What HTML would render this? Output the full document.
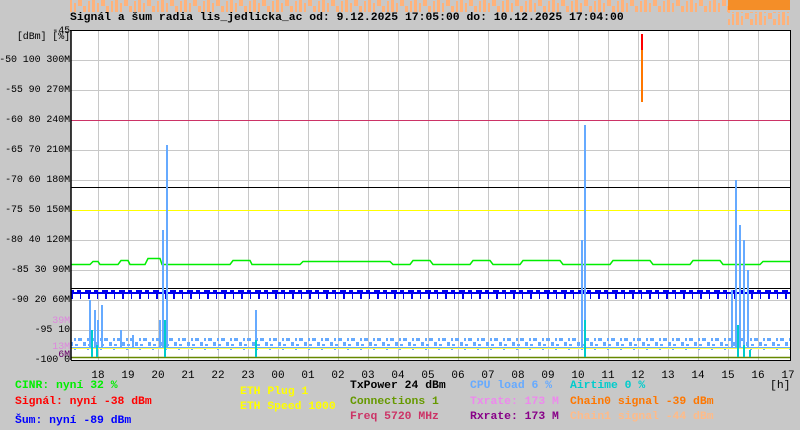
<!DOCTYPE html>
<html><head><meta charset="utf-8"><style>
body{margin:0;width:800px;height:430px;background:#c8c8c8;overflow:hidden;position:relative;font-family:"Liberation Mono",monospace;font-weight:bold;font-size:11.4px}
.t{position:absolute;white-space:pre;line-height:13px}
.y{position:absolute;right:730px;white-space:pre;font-weight:normal;font-size:10px;line-height:12px;letter-spacing:-0.1px}
.h{position:absolute;top:370px;width:30px;margin-left:-15px;text-align:center;font-weight:normal;font-size:11px;line-height:13px}
</style></head><body>
<svg width="800" height="430" style="position:absolute;left:0;top:0">
<defs>
<pattern id="or" width="23" height="13" patternUnits="userSpaceOnUse">
<rect x="0" y="0" width="3" height="13" fill="#ffb27a"/><rect x="5" y="3" width="2" height="10" fill="#ffb27a"/><rect x="9" y="0" width="4" height="6" fill="#ffb27a"/><rect x="14" y="6" width="3" height="7" fill="#ffb27a"/><rect x="19" y="1" width="2" height="12" fill="#ffb27a"/>
</pattern>
<pattern id="bl" width="17" height="10" patternUnits="userSpaceOnUse">
<rect x="0" y="0" width="6" height="3" fill="#0000ee"/><rect x="3" y="3" width="2" height="6" fill="#0000ee"/><rect x="9" y="0" width="4" height="4" fill="#0000ee"/><rect x="12" y="4" width="1" height="5" fill="#0000ee"/>
</pattern>
<pattern id="lb" width="13" height="12" patternUnits="userSpaceOnUse">
<rect x="0" y="2" width="4" height="3" fill="#66aaff"/><rect x="5" y="6" width="3" height="4" fill="#66aaff"/><rect x="9" y="0" width="2" height="5" fill="#66aaff"/><rect x="10" y="8" width="3" height="2" fill="#66aaff"/>
</pattern>
</defs>
<rect x="70" y="0" width="660" height="12" fill="url(#or)"/>
<rect x="728" y="0" width="62" height="10" fill="#ff8000" opacity=".8"/>
<rect x="728" y="12" width="62" height="13" fill="url(#or)"/>
<rect x="71" y="30" width="719" height="330" fill="#fff"/>
<g stroke="#c8c8c8" stroke-width="1">
<path d="M98.5 30V360M128.5 30V360M158.5 30V360M188.5 30V360M218.5 30V360M248.5 30V360M278.5 30V360M308.5 30V360M338.5 30V360M368.5 30V360M398.5 30V360M428.5 30V360M458.5 30V360M488.5 30V360M518.5 30V360M548.5 30V360M578.5 30V360M608.5 30V360M638.5 30V360M668.5 30V360M698.5 30V360M728.5 30V360M758.5 30V360"/>
<path d="M71 60.5H790M71 90.5H790M71 150.5H790M71 180.5H790M71 240.5H790M71 270.5H790M71 300.5H790M71 330.5H790"/>
</g>
<path d="M71 120.5H790" stroke="#cc3366"/>
<path d="M71 187.5H790" stroke="#000"/>
<path d="M71 210.5H790" stroke="#ffff00"/>
<path d="M71 264.5H90L93 261.5H98L100 264.5H118L121 260.5H128L130 264.5H145L148 258.5H160L162 264.5H230L233 260.5H250L252 264.5H300L303 261.5H390L393 264.5H410L413 260.5H430L433 264.5H470L473 260.5H490L493 264.5H520L523 260.5H560L563 264.5H610L613 260.5H650L653 264.5H690L693 260.5H720L723 264.5H760L763 261.5H790" stroke="#00ee00" fill="none" stroke-width="1.5"/>
<rect x="71" y="289" width="720" height="10" fill="url(#bl)"/>
<path d="M71 293H790" stroke="#0000ee" stroke-width="2"/>
<path d="M71 288.5H790" stroke="#000"/>
<rect x="71" y="338" width="719" height="12" fill="url(#lb)"/>
<path d="M71 348H790" stroke="#66aaff" stroke-width="2"/>
<path d="M71 348.5H790" stroke="#ffff44"/>
<path d="M71 357.5H790" stroke="#668800" stroke-width="1.5"/>
<g stroke="#66aaff" stroke-width="2">
<path d="M90 348V300M95 348V310M98 348V320M102 348V305M167 348V145M163 348V230M160 348V320M256 348V310M585 348V125M582 348V240M736 348V180M740 348V225M744 348V240M748 348V270M732 348V290M121 348V330M133 348V335"/>
</g>
<g stroke="#00cccc" stroke-width="2">
<path d="M92 357V330M97 357V345M165 357V320M256 357V340M585 357V320M738 357V325M744 357V345M750 357V350"/>
</g>
<path d="M642 34V50" stroke="#ff0000" stroke-width="2"/>
<path d="M642 50V102" stroke="#ff7700" stroke-width="2"/>
<path d="M71 30V360" stroke="#000" stroke-width="1.5"/>
<path d="M71 360.5H790M70 30.5H790M790.5 30V361" stroke="#000"/>
</svg>
<div class="t" style="left:70px;top:12px">Signál a šum radia lis_jedlicka_ac od: 9.12.2025 17:05:00 do: 10.12.2025 17:04:00</div>
<div class="y" style="top:26px">-45</div>
<div class="y" style="top:32px">[dBm] [%]</div>
<div class="y" style="top:55px">-50 100 300M</div>
<div class="y" style="top:85px">-55 90 270M</div>
<div class="y" style="top:115px">-60 80 240M</div>
<div class="y" style="top:145px">-65 70 210M</div>
<div class="y" style="top:175px">-70 60 180M</div>
<div class="y" style="top:205px">-75 50 150M</div>
<div class="y" style="top:235px">-80 40 120M</div>
<div class="y" style="top:265px">-85 30 90M</div>
<div class="y" style="top:295px">-90 20 60M</div>
<div class="y" style="top:316px;color:#dd88dd">39M</div>
<div class="y" style="top:325px">-95 10</div>
<div class="y" style="top:342px;color:#dd88dd">13M</div>
<div class="y" style="top:350px;color:#660066">6M</div>
<div class="y" style="top:355px">-100 0</div>
<div class="h" style="left:98px">18</div><div class="h" style="left:128px">19</div><div class="h" style="left:158px">20</div><div class="h" style="left:188px">21</div><div class="h" style="left:218px">22</div><div class="h" style="left:248px">23</div><div class="h" style="left:278px">00</div><div class="h" style="left:308px">01</div><div class="h" style="left:338px">02</div><div class="h" style="left:368px">03</div><div class="h" style="left:398px">04</div><div class="h" style="left:428px">05</div><div class="h" style="left:458px">06</div><div class="h" style="left:488px">07</div><div class="h" style="left:518px">08</div><div class="h" style="left:548px">09</div><div class="h" style="left:578px">10</div><div class="h" style="left:608px">11</div><div class="h" style="left:638px">12</div><div class="h" style="left:668px">13</div><div class="h" style="left:698px">14</div><div class="h" style="left:728px">15</div><div class="h" style="left:758px">16</div><div class="h" style="left:788px">17</div>
<div class="t" style="left:770px;top:380px;font-weight:normal">[h]</div>
<div class="t" style="left:15px;top:380px;color:#00ee00">CINR: nyní 32 %</div>
<div class="t" style="left:15px;top:396px;color:#ff0000">Signál: nyní -38 dBm</div>
<div class="t" style="left:15px;top:415px;color:#0000ff">Šum: nyní -89 dBm</div>
<div class="t" style="left:240px;top:386px;color:#ffff00">ETH Plug 1</div>
<div class="t" style="left:240px;top:401px;color:#ffff00">ETH Speed 1000</div>
<div class="t" style="left:350px;top:380px;color:#000">TxPower 24 dBm</div>
<div class="t" style="left:350px;top:396px;color:#669900">Connections 1</div>
<div class="t" style="left:350px;top:411px;color:#cc3366">Freq 5720 MHz</div>
<div class="t" style="left:470px;top:380px;color:#66aaff">CPU load 6 %</div>
<div class="t" style="left:470px;top:396px;color:#ee88ee">Txrate: 173 M</div>
<div class="t" style="left:470px;top:411px;color:#880088">Rxrate: 173 M</div>
<div class="t" style="left:570px;top:380px;color:#00cccc">Airtime 0 %</div>
<div class="t" style="left:570px;top:396px;color:#ff7700">Chain0 signal -39 dBm</div>
<div class="t" style="left:570px;top:411px;color:#ffbb88">Chain1 signal -44 dBm</div>
</body></html>
